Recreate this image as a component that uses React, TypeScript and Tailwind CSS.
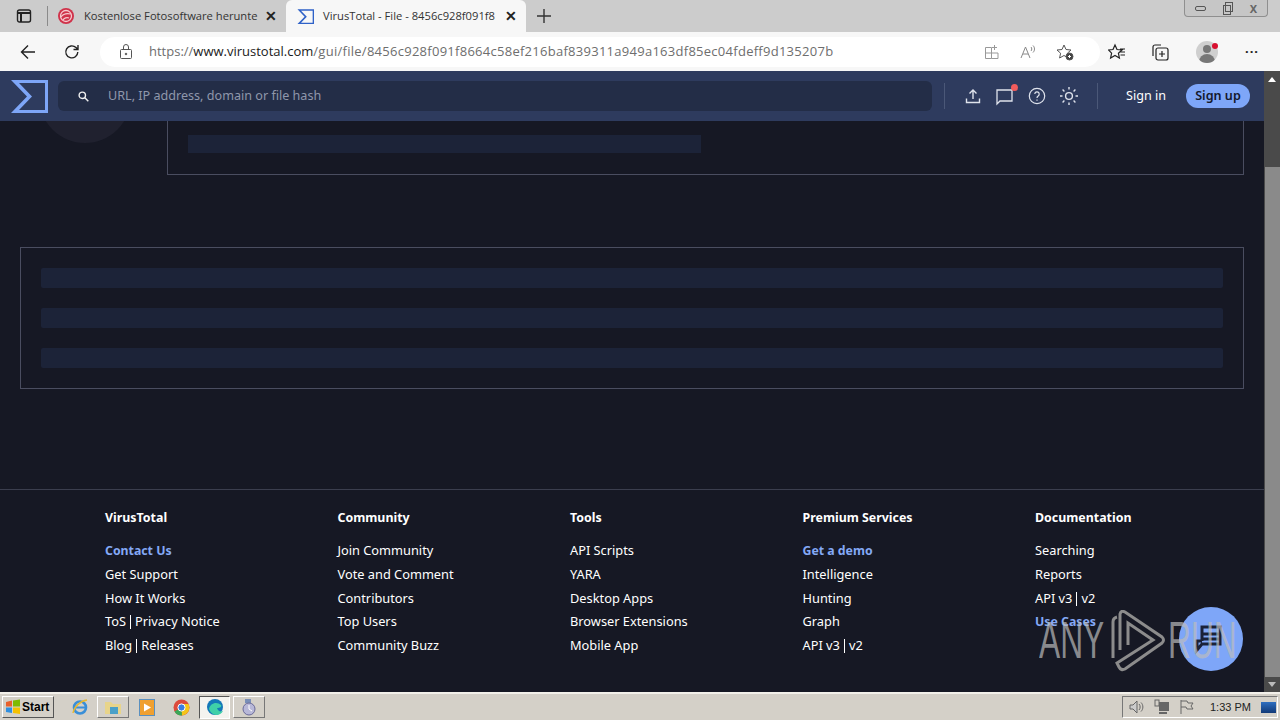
const footerCols = [
  {
    title: "VirusTotal",
    links: ["Contact Us", "Get Support", "How It Works", "ToS | Privacy Notice", "Blog | Releases"],
    accent: "Contact Us",
  },
  {
    title: "Community",
    links: ["Join Community", "Vote and Comment", "Contributors", "Top Users", "Community Buzz"],
  },
  {
    title: "Tools",
    links: ["API Scripts", "YARA", "Desktop Apps", "Browser Extensions", "Mobile App"],
  },
  {
    title: "Premium Services",
    links: ["Get a demo", "Intelligence", "Hunting", "Graph", "API v3 | v2"],
    accent: "Get a demo",
  },
  {
    title: "Documentation",
    links: ["Searching", "Reports", "API v3 | v2", "Use Cases"],
    accent: "Use Cases",
  },
];

const Sigma = ({ size, outer, inner }: { size: number; outer: string; inner: string }) => (
  <svg width={size} height={size} viewBox="0 0 38 34" fill="none">
    <path d="M1 1h37v33H1l16-16.5z" fill={outer} />
    <path d="M9 4h26v27H9l13-13.5z" fill={inner} />
  </svg>
);

const TabStrip = () => (
  <div className="flex h-[32px] bg-[#cccccc] text-[12px] text-[#333333]">
    <div className="flex w-[47px] items-center pl-[16px]">
      <svg width="16" height="16" viewBox="0 0 16 16" fill="none" stroke="#222" strokeWidth="1.4">
        <rect x="1.5" y="2" width="13" height="12" rx="2" />
        <path d="M1.5 5h13M5 5v9" strokeWidth="2" />
      </svg>
    </div>
    <div className="my-[6px] w-px bg-[#8a8a8a]" />
    <div className="flex w-[238px] items-center pl-[9px]">
      <svg width="18" height="18" viewBox="0 0 18 18" className="shrink-0">
        <circle cx="9" cy="9" r="8" fill="#d0324a" />
        <circle cx="9" cy="9" r="5.5" fill="none" stroke="#f6c9cf" strokeWidth="1.3" />
        <path d="M4 10c2-3 6-4 10-3M6 13c1-2 4-3 6-2" stroke="#f6c9cf" strokeWidth="1.2" fill="none" />
      </svg>
      <span className="ml-[9px] w-[173px] whitespace-nowrap font-['Open_Sans',sans-serif] text-[11.2px]">
        Kostenlose Fotosoftware herunte
      </span>
      <span className="ml-[8px] text-[14px] font-bold leading-none text-[#222]">✕</span>
    </div>
    <div className="flex w-[240px] items-center rounded-t-[6px] bg-[#f7f7f7] pl-[11px]">
      <Sigma size={17} outer="#2f62c8" inner="#f7f7f7" />
      <span className="ml-[9px] w-[175px] whitespace-nowrap font-['Open_Sans',sans-serif] text-[11.2px]">
        VirusTotal - File - 8456c928f091f8
      </span>
      <span className="ml-[7px] text-[14px] font-bold leading-none text-[#222]">✕</span>
    </div>
    <div className="flex w-[36px] items-center justify-center">
      <svg width="16" height="16" viewBox="0 0 16 16" stroke="#333" strokeWidth="1.4">
        <path d="M8 1v14M1 8h14" />
      </svg>
    </div>
    <div className="flex-1" />
    <div className="mr-[12px] flex h-[17px] w-[84px] items-center justify-around rounded-b-[4px] border border-t-0 border-[#8f8f8f] bg-[#c6c6c6] px-[2px]">
      <div className="h-[5px] w-[11px] rounded-[2px] border border-[#555]" />
      <svg width="12" height="13" viewBox="0 0 12 13" fill="none" stroke="#555">
        <rect x="1.5" y="3.5" width="7" height="9" />
        <rect x="3.5" y="0.5" width="7" height="9" />
      </svg>
      <span className="text-[11px] font-bold leading-none text-[#666]">X</span>
    </div>
  </div>
);

const ToolBar = () => (
  <div className="flex h-[39px] items-center bg-[#f7f7f7]">
    <div className="flex w-[100px] items-center pl-[20px]">
      <svg width="16" height="16" viewBox="0 0 16 16" fill="none" stroke="#222" strokeWidth="1.4">
        <path d="M15 8H1.5M8 1.5L1.5 8 8 14.5" />
      </svg>
      <svg className="ml-[28px]" width="16" height="16" viewBox="0 0 16 16" fill="none" stroke="#222" strokeWidth="1.4">
        <path d="M13.8 8a6 6 0 1 1-1.8-4.4L14 5.500M14 1v4.500H9.500" />
      </svg>
    </div>
    <div className="flex h-[30px] w-[1000px] items-center rounded-full bg-white pl-[19px]">
      <svg width="14" height="16" viewBox="0 0 14 16" fill="none" stroke="#555">
        <rect x="1.5" y="5.5" width="11" height="9" rx="1" />
        <path d="M4.500 5.500V3a2.500 2.500 0 0 1 5 0v2.500" />
        <circle cx="7" cy="10" r="0.8" fill="#555" />
      </svg>
      <span className="ml-[16px] whitespace-nowrap font-['Open_Sans',sans-serif] text-[13px] text-[#6e6e6e]">
        https://<span className="text-[#1a1a1a]">www.virustotal.com</span>
        <span className="tracking-[0.27px]">/gui/file/8456c928f091f8664c58ef216baf839311a949a163df85ec04fdeff9d135207b</span>
      </span>
      <div className="ml-auto flex items-center gap-[20px] pr-[26px]">
        <svg width="16" height="16" viewBox="0 0 16 16" fill="none" stroke="#999">
          <path d="M1.500 3.500h6v11h-6zM7.500 9h6.500v5.500H7.500M1.500 9h6M10.500 1v5M8 3.500h5" />
        </svg>
        <svg width="16" height="16" viewBox="0 0 16 16" fill="none" stroke="#888">
          <path d="M1 14L5.500 3 10 14M3 10h5M11 3c1 1 1 3 0 4M13 1.500c2 2 2 5 0 7" />
        </svg>
        <svg width="18" height="18" viewBox="0 0 18 18" fill="none" stroke="#555">
          <path d="M8 2l2 4.500 5 .5-3.600 3.200 1 4.800L8 12.500 3.600 15l1-4.800L1 7l5-.5z" />
          <circle cx="13.500" cy="13.500" r="3.500" fill="#444" />
          <path d="M13.500 12v3M12 13.500h3" stroke="#fff" />
        </svg>
      </div>
    </div>
    <div className="flex flex-1 items-center pl-[8px]">
      <svg width="18" height="18" viewBox="0 0 18 18" fill="none" stroke="#222" strokeWidth="1.2">
        <path d="M7 2l2 4.500 5 .5-3.600 3.200 1 4.800L7 12.500 2.600 15l1-4.800L0.500 7l4.500-.5zM12 6h5M12.500 9h4.500M12.500 12h4.500" />
      </svg>
      <svg className="ml-[25px]" width="18" height="18" viewBox="0 0 18 18" fill="none" stroke="#222" strokeWidth="1.2">
        <rect x="5" y="5" width="12" height="12" rx="2" />
        <path d="M2 13V4a2 2 0 0 1 2-2h6M11 8v6M8 11h6" />
      </svg>
      <div className="relative ml-[27px] h-[22px] w-[22px]">
        <div className="h-[22px] w-[22px] overflow-hidden rounded-full bg-[#cfcfcf]">
          <div className="mx-auto mt-[4px] h-[8px] w-[8px] rounded-full bg-[#777]" />
          <div className="mx-auto mt-[1px] h-[10px] w-[16px] rounded-t-full bg-[#777]" />
        </div>
        <div className="absolute right-0 top-[2px] h-[6px] w-[6px] rounded-full bg-[#d81030]" />
      </div>
      <div className="ml-[27px] text-[13px] font-bold leading-none tracking-[1px] text-[#222]">···</div>
    </div>
  </div>
);

const Header = () => (
  <div className="relative z-10 flex h-[50px] items-center bg-[#2e3b5e]">
    <div className="ml-[10px]">
      <Sigma size={38} outer="#7ea6f8" inner="#2e3b5e" />
    </div>
    <div className="ml-[10px] flex h-[30px] w-[874px] items-center rounded-[6px] bg-[#232d47] pl-[20px]">
      <svg width="11" height="11" viewBox="0 0 11 11" fill="none" stroke="#f0f0f0" strokeWidth="1.4">
        <circle cx="4.300" cy="4.300" r="3.200" />
        <path d="M6.800 6.800L10.300 10.300" />
      </svg>
      <span className="ml-[19px] pt-[1px] font-['Noto_Sans',sans-serif] text-[12.6px] text-[#8f97ab]">
        URL, IP address, domain or file hash
      </span>
    </div>
    <div className="ml-[12px] h-[26px] w-px bg-[#4b5878]" />
    <svg className="ml-[20px]" width="16" height="16" viewBox="0 0 16 16" fill="none" stroke="#dfe3ec" strokeWidth="1.4">
      <path d="M8 11V2M4.500 5.500L8 2l3.500 3.500M1.500 10.500v4h13v-4" />
    </svg>
    <div className="relative ml-[15px] h-[18px] w-[20px]">
      <svg width="18" height="18" viewBox="0 0 18 18" fill="none" stroke="#dfe3ec" strokeWidth="1.3" className="mt-[1px]">
        <path d="M1 2h15v11H4l-3 3z" />
      </svg>
      <div className="absolute -right-[2px] -top-[3px] h-[7px] w-[7px] rounded-full bg-[#f25c5c]" />
    </div>
    <svg className="ml-[12px]" width="18" height="18" viewBox="0 0 18 18" fill="none" stroke="#dfe3ec" strokeWidth="1.2">
      <circle cx="9" cy="9" r="7.700" />
      <path d="M6.800 7a2.200 2.200 0 1 1 3.400 1.900c-.8.5-1.200 1-1.200 2M9 12.500v1.200" />
    </svg>
    <svg className="ml-[13px]" width="20" height="20" viewBox="0 0 20 20" fill="none" stroke="#dfe3ec" strokeWidth="1.4">
      <circle cx="10" cy="10" r="3.400" />
      <path d="M10 1v2.500M10 16.500V19M1 10h2.500M16.500 10H19M3.600 3.600l1.800 1.800M14.600 14.600l1.800 1.800M3.600 16.400l1.800-1.800M14.600 5.400l1.800-1.800" />
    </svg>
    <div className="ml-[18px] h-[26px] w-px bg-[#4b5878]" />
    <span className="ml-[28px] pt-[1px] font-['Noto_Sans',sans-serif] text-[12.6px] text-white">Sign in</span>
    <div className="ml-[20px] flex h-[24px] w-[64px] items-center justify-center rounded-full bg-[#7ea6f8] pt-[1px] font-['Noto_Sans',sans-serif] text-[12.6px] font-semibold text-[#14182b]">
      Sign up
    </div>
  </div>
);

// the pipes in the reference sit tight against the words, thinner than a spaced glyph
const FooterLink = ({ text }: { text: string }) => {
  const parts = text.split(" | ");
  return (
    <>
      {parts[0]}
      {parts[1] && (
        <>
          <span className="mx-[4px] inline-block h-[14px] w-px translate-y-[3px] bg-white" />
          {parts[1]}
        </>
      )}
    </>
  );
};

const Footer = () => (
  <div className="mt-[100px] flex h-[203px] border-t border-[#3b3e4e] pl-[105px] pt-[18px] font-['Noto_Sans',sans-serif] text-[12.8px] text-white">
    {footerCols.map((col) => (
      <div key={col.title} className="w-[232.5px] shrink-0">
        <div className="h-[20px] text-[12.4px] font-bold leading-[20px]">{col.title}</div>
        <div className="mt-[11px] flex flex-col">
          {col.links.map((l) => (
            <div
              key={l}
              className={
                l === col.accent
                  ? "h-[23.75px] text-[12.3px] font-bold leading-[23.75px] text-[#84a9f6]"
                  : "h-[23.75px] leading-[23.75px]"
              }
            >
              <FooterLink text={l} />
            </div>
          ))}
        </div>
      </div>
    ))}
  </div>
);

const ScrollBar = () => (
  <div className="flex w-[16px] flex-col items-center bg-[#4a4a4a]">
    <div className="flex h-[17px] items-center justify-center">
      <div className="h-0 w-0 border-x-[4px] border-b-[5px] border-x-transparent border-b-white" />
    </div>
    <div className="mt-[79px] h-[510px] w-[15px] bg-[#8a8a8a]" />
    <div className="mt-auto flex h-[15px] items-center justify-center">
      <div className="h-0 w-0 border-x-[4px] border-t-[5px] border-x-transparent border-t-[#bbbbbb]" />
    </div>
  </div>
);

const TaskBar = () => (
  <div className="flex h-[28px] items-center border-t-2 border-[#f2f0ea] bg-[#d4d0c8]">
    <div className="ml-[2px] flex h-[22px] w-[52px] items-center gap-[1px] border border-b-[#555] border-l-white border-r-[#555] border-t-white pl-[2px] font-['Liberation_Sans',sans-serif] text-[12px] font-bold text-black">
      <svg width="16" height="16" viewBox="0 0 16 16">
        <path d="M1 3l6-1.500V7.500H1z" fill="#e8602c" />
        <path d="M8 1.500l7-1v7H8z" fill="#7fba00" />
        <path d="M1 8.500h6V14L1 13z" fill="#2f8fe0" />
        <path d="M8 8.500h7V15l-7-1z" fill="#f5c100" />
      </svg>
      Start
    </div>
    <div className="ml-[16px] flex h-[22px] w-[20px] items-center justify-center">
      <svg width="18" height="18" viewBox="0 0 18 18" fill="none">
        <circle cx="9" cy="9.500" r="6" stroke="#3a8fd8" strokeWidth="2.600" />
        <path d="M4 9.500h10" stroke="#3a8fd8" strokeWidth="2" />
        <path d="M2 15C3 9 9 3 16 2" stroke="#e8b830" strokeWidth="1.400" />
      </svg>
    </div>
    <div className="ml-[7px] flex h-[22px] w-[32px] items-center justify-center border border-b-[#777] border-l-white border-r-[#777] border-t-white">
      <svg width="18" height="16" viewBox="0 0 18 16">
        <path d="M1 3h6l2 2h8v10H1z" fill="#e8d48a" />
        <rect x="6" y="8" width="8" height="7" fill="#4aa0c8" />
      </svg>
    </div>
    <div className="ml-[10px] flex h-[22px] w-[16px] items-center justify-center">
      <svg width="16" height="17" viewBox="0 0 16 17">
        <rect x="0.500" y="0.500" width="15" height="16" fill="#f0a030" stroke="#5a90c0" />
        <path d="M5 4.500l7 4-7 4z" fill="#fff" />
      </svg>
    </div>
    <div className="ml-[17px] flex h-[22px] w-[18px] items-center justify-center">
      <svg width="17" height="17" viewBox="0 0 17 17">
        <circle cx="8.500" cy="8.500" r="8" fill="#dc4a3c" />
        <path d="M8.500 8.500L1.500 12.500A8 8 0 0 0 9 16.500z" fill="#3aa757" />
        <path d="M8.500 5h7A8 8 0 0 1 9 16.500z" fill="#f5c518" />
        <circle cx="8.500" cy="8.500" r="3.600" fill="#3b7de0" stroke="#fff" />
      </svg>
    </div>
    <div className="ml-[9px] flex h-[23px] w-[31px] items-center justify-center border border-b-white border-l-[#555] border-r-white border-t-[#555] bg-[#f4f3ef]">
      <svg width="18" height="18" viewBox="0 0 18 18">
        <circle cx="9" cy="9" r="8" fill="#1478b8" />
        <path d="M3 11c1-6 8-8 12-4 1 2-1 3-4 3 1 3 3 4 6 3-2 4-7 5-10 3-2-1-3-3-4-5z" fill="#3fd0a8" />
      </svg>
    </div>
    <div className="ml-[3px] flex h-[22px] w-[32px] items-center justify-center border border-b-[#777] border-l-white border-r-[#777] border-t-white">
      <svg width="18" height="18" viewBox="0 0 18 18">
        <rect x="5" y="1" width="6" height="4" fill="#7a8fb8" />
        <circle cx="9" cy="11" r="6" fill="#b8b8d8" stroke="#6a6a9a" />
        <path d="M9 7v4l3 2" stroke="#fff" fill="none" />
      </svg>
    </div>
    <div className="ml-auto mr-[2px] flex h-[22px] w-[156px] items-center border border-b-white border-l-[#777] border-r-white border-t-[#777] pl-[6px] font-['Liberation_Sans',sans-serif] text-[11px] text-[#222]">
      <svg width="16" height="16" viewBox="0 0 16 16" fill="none" stroke="#666">
        <path d="M1 6h3l4-4v12l-4-4H1z" fill="#ccc" />
        <path d="M10 5c1.500 1.500 1.500 4.500 0 6M12 3.500c2.500 2.500 2.500 6.500 0 9" />
      </svg>
      <svg className="ml-[9px]" width="16" height="16" viewBox="0 0 16 16" fill="#666">
        <rect x="5" y="3" width="10" height="9" />
        <rect x="1" y="1" width="4" height="6" fill="none" stroke="#666" />
        <rect x="5" y="13" width="8" height="2" />
      </svg>
      <svg className="ml-[9px]" width="16" height="16" viewBox="0 0 16 16" fill="none" stroke="#666">
        <path d="M2 1v14M2 2h6l1 2h5l-2 3 2 3H8L7 8H2" />
      </svg>
      <span className="ml-[15px] whitespace-nowrap">1:33 PM</span>
      <div className="ml-[10px] h-[11px] w-[15px] bg-gradient-to-b from-[#2f6fc0] to-[#123a78]" />
    </div>
  </div>
);

export default function App() {
  return (
    <div className="flex h-[720px] w-[1280px] flex-col overflow-hidden bg-[#161824]">
      <TabStrip />
      <ToolBar />
      <div className="flex h-[621px]">
        <div className="relative w-[1264px] overflow-hidden">
          <Header />
          <div className="flex h-[54px] items-end pl-[39px] pr-[20px]">
            <div className="-mt-[70px] mb-[32px] h-[92px] w-[92px] shrink-0 self-end rounded-full bg-[#20212f]" />
            <div className="ml-[36px] flex h-[104px] flex-1 items-end border border-[#4a4d60] p-[21px_20px]">
              <div className="h-[18px] w-[513px] bg-[#1c2338]" />
            </div>
          </div>
          <div className="mx-[20px] mt-[72px] flex h-[142px] flex-col gap-[20px] border border-[#4a4d60] px-[20px] pt-[20px]">
            <div className="h-[20px] rounded-[2px] bg-[#1c2338]" />
            <div className="h-[20px] rounded-[2px] bg-[#1c2338]" />
            <div className="h-[20px] rounded-[2px] bg-[#1c2338]" />
          </div>
          <Footer />
          <div className="absolute left-[1039px] top-[536px] h-[64px] w-[205px]">
            <div className="absolute left-[140px] top-0 flex h-[64px] w-[64px] items-center justify-center rounded-full bg-[#7ea6f8]">
              <svg width="34" height="34" viewBox="0 0 34 34" fill="none" stroke="#1a2238" strokeWidth="3">
                <path d="M8 19V5h18v17H8l-5 6v-9h5M8 12h18M8 17h18" />
              </svg>
            </div>
            <span className="absolute left-0 top-[1px] origin-left scale-x-[0.61] font-['Liberation_Sans',sans-serif] text-[52px] leading-[64px] text-[#bdbdbd]/70">
              ANY
            </span>
            <svg className="absolute left-[66px] top-[3px]" width="64" height="64" viewBox="0 0 64 64" fill="none" stroke="#8c8c8c" strokeWidth="3">
              <path d="M8 48V12Q8 8 12 7" />
              <path d="M15 40V4Q16 0 20 2L57 27Q60 30 57 33L20 59Q16 61 14 57L12 53L48 30L23 13V35" />
            </svg>
            <span className="absolute left-[129px] top-[1px] origin-left scale-x-[0.61] font-['Liberation_Sans',sans-serif] text-[52px] leading-[64px] text-[#bdbdbd]/70">
              RUN
            </span>
          </div>
        </div>
        <ScrollBar />
      </div>
      <TaskBar />
    </div>
  );
}
